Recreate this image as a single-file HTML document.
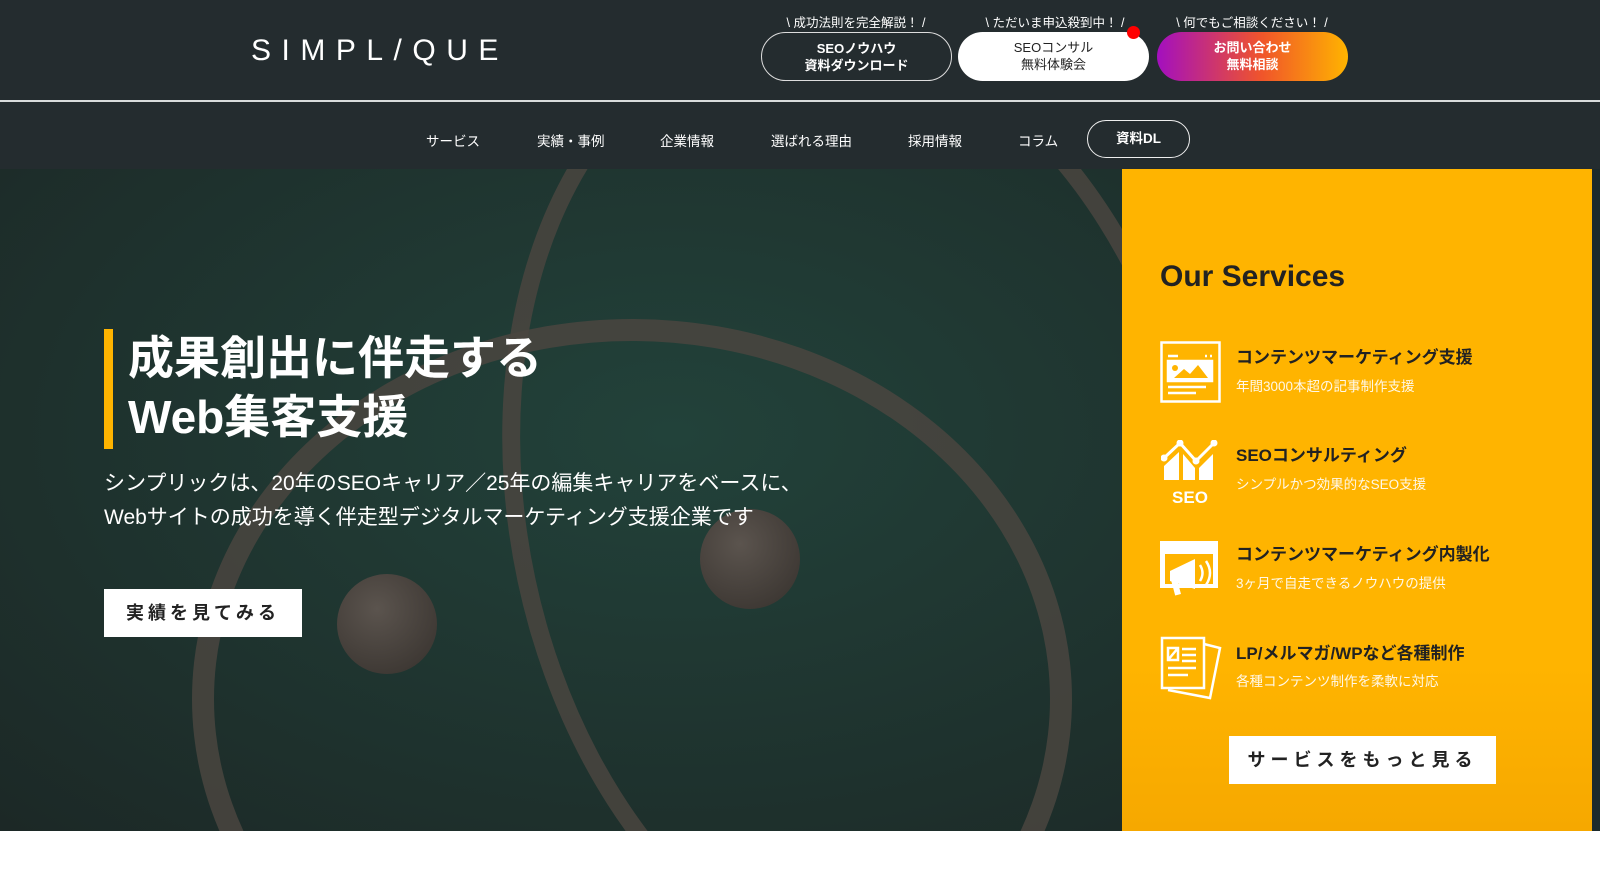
<!DOCTYPE html>
<html><head><meta charset="utf-8"><style>
*{margin:0;padding:0;box-sizing:border-box}
html,body{width:1600px;height:880px;overflow:hidden}
body{background:#fff;font-family:"Liberation Sans","Noto Sans CJK JP",sans-serif;position:relative}
.hdr{position:absolute;left:0;top:0;width:1600px;height:169px;background:#242c2f}
.line{position:absolute;left:0;top:100px;width:1600px;height:2px;background:#d9dcdc}
.logo{position:absolute;left:251px;top:34px;color:#fff;font-size:30px;letter-spacing:10.5px;font-weight:400}
.tag{position:absolute;top:12px;color:#fff;font-size:12.5px;text-align:center;width:200px}
.btn{position:absolute;top:32px;height:49px;border-radius:25px;font-size:13px;font-weight:700;text-align:center;line-height:17px;padding-top:7px}
.nav{position:absolute;top:130px;color:#fff;font-size:13.5px}
.hero{position:absolute;left:0;top:169px;width:1122px;height:662px;background:radial-gradient(ellipse at 60% 40%,#22423a 0%,#1f3530 50%,#1c2826 100%);overflow:hidden}
.ring{position:absolute;border-radius:50%;border:22px solid #4a4540;opacity:.85}
.ball{position:absolute;border-radius:50%;background:radial-gradient(circle at 40% 35%,#5b544e,#35302c)}
.panel{position:absolute;left:1122px;top:169px;width:470px;height:662px;background:linear-gradient(#ffb400 75%,#f6a800)}
.strip{position:absolute;left:1592px;top:169px;width:8px;height:662px;background:#1c2a2c}
.svc{position:absolute;left:1236px;color:#222;font-size:17px;font-weight:700}
.sub{position:absolute;left:1236px;color:#fff8e8;font-size:13.5px}
</style></head><body>
<div class="hdr"></div><div class="line"></div>
<div class="logo">SIMPL/QUE</div>
<div class="tag" style="left:756px">\ 成功法則を完全解説！ /</div>
<div class="tag" style="left:955px">\ ただいま申込殺到中！ /</div>
<div class="tag" style="left:1152px">\ 何でもご相談ください！ /</div>
<div class="btn" style="left:761px;width:191px;border:1.5px solid #ddd;color:#fff">SEOノウハウ<br>資料ダウンロード</div>
<div class="btn" style="left:958px;width:191px;background:#fff;color:#222;font-weight:400">SEOコンサル<br>無料体験会</div>
<div style="position:absolute;left:1127px;top:26px;width:13px;height:13px;border-radius:50%;background:#f00"></div>
<div class="btn" style="left:1157px;width:191px;background:linear-gradient(90deg,#a30fbf,#f0552a 55%,#ffb400);color:#fff">お問い合わせ<br>無料相談</div>
<div class="nav" style="left:426px">サービス</div>
<div class="nav" style="left:537px">実績・事例</div>
<div class="nav" style="left:660px">企業情報</div>
<div class="nav" style="left:771px">選ばれる理由</div>
<div class="nav" style="left:908px">採用情報</div>
<div class="nav" style="left:1018px">コラム</div>
<div style="position:absolute;left:1087px;top:120px;width:103px;height:38px;border:1.5px solid #eee;border-radius:19px;color:#fff;font-size:13.5px;font-weight:700;text-align:center;line-height:35px">資料DL</div>
<div class="hero">
<div class="ring" style="left:192px;top:150px;width:880px;height:760px"></div>
<div class="ring" style="left:510px;top:-160px;width:700px;height:1000px;transform:rotate(-12deg);border-width:18px"></div>
<div class="ball" style="left:337px;top:405px;width:100px;height:100px"></div>
<div class="ball" style="left:700px;top:340px;width:100px;height:100px"></div>
<div style="position:absolute;left:104px;top:160px;width:9px;height:120px;background:#ffb400"></div>
<div style="position:absolute;left:128px;top:160px;color:#fff;font-size:46px;font-weight:700;line-height:59px">成果創出に伴走する<br>Web集客支援</div>
<div style="position:absolute;left:104px;top:298px;color:#fff;font-size:21px;line-height:34px">シンプリックは、20年のSEOキャリア／25年の編集キャリアをベースに、<br>Webサイトの成功を導く伴走型デジタルマーケティング支援企業です</div>
<div style="position:absolute;left:104px;top:420px;width:198px;height:48px;background:#fff;color:#222;font-size:18px;font-weight:700;letter-spacing:4px;text-align:center;line-height:48px">実績を見てみる</div>
</div>
<div class="panel"></div><div class="strip"></div>
<div style="position:absolute;left:1160px;top:260px;color:#222;font-size:30px;font-weight:700">Our Services</div>
<svg style="position:absolute;left:1160px;top:341px" width="61" height="62" viewBox="0 0 61 62" fill="none" stroke="#fff" stroke-width="2.5"><rect x="1.5" y="1.5" width="58" height="59"/><rect x="8" y="20" width="44" height="20" fill="#fff"/><path d="M8 15h10M45 15h2M50 15h2M8 46h38M8 52h28"/><path d="M14 37l10-9 6 5 8-9 10 13z" fill="#ffb400" stroke="none"/><circle cx="15" cy="27" r="3" fill="#ffb400" stroke="none"/></svg>
<svg style="position:absolute;left:1161px;top:440px" width="58" height="65" viewBox="0 0 58 65"><path d="M3 18l16-15 16 18 18-18" stroke="#fff" stroke-width="3" fill="none"/><g fill="#fff"><circle cx="3" cy="18" r="3.5"/><circle cx="19" cy="3" r="3.5"/><circle cx="35" cy="21" r="3.5"/><circle cx="53" cy="3" r="3.5"/><path d="M3 40v-14l15-14 v28zM22 40v-26l12 14 v12zM38 40v-12l14-14v26z"/></g><text x="29" y="63" fill="#fff" font-size="17" font-weight="700" text-anchor="middle" font-family="Liberation Sans">SEO</text></svg>
<svg style="position:absolute;left:1160px;top:541px" width="60" height="57" viewBox="0 0 60 57"><rect x="0" y="0" width="58" height="47" fill="#fff"/><rect x="5" y="13" width="48" height="30" fill="#ffb400"/><g fill="#fff"><circle cx="31" cy="6" r="2.5"/><circle cx="39" cy="6" r="2.5"/><circle cx="47" cy="6" r="2.5"/><path d="M10 30l25-12v30l-25-8z"/><rect x="13" y="38" width="6" height="16" transform="rotate(-15 16 46)"/></g><path d="M40 24q5 8 0 16M46 20q8 12 0 24" stroke="#fff" stroke-width="2.5" fill="none"/></svg>
<svg style="position:absolute;left:1160px;top:636px" width="62" height="64" viewBox="0 0 62 64" fill="none" stroke="#fff" stroke-width="2.5"><path d="M44 8l16 4-10 50-42-8"/><rect x="2" y="2" width="42" height="50" fill="#ffb400"/><path d="M8 12h10v12h-10z M8 24l10-12" /><path d="M22 13h14M22 19h14M22 25h14M8 32h28M8 39h20"/></svg>
<div class="svc" style="top:343px">コンテンツマーケティング支援</div>
<div class="sub" style="top:375px">年間3000本超の記事制作支援</div>
<div class="svc" style="top:441px">SEOコンサルティング</div>
<div class="sub" style="top:473px">シンプルかつ効果的なSEO支援</div>
<div class="svc" style="top:540px">コンテンツマーケティング内製化</div>
<div class="sub" style="top:572px">3ヶ月で自走できるノウハウの提供</div>
<div class="svc" style="top:639px">LP/メルマガ/WPなど各種制作</div>
<div class="sub" style="top:670px">各種コンテンツ制作を柔軟に対応</div>
<div style="position:absolute;left:1229px;top:736px;width:267px;height:48px;background:#fff;color:#222;font-size:18px;font-weight:700;letter-spacing:5px;text-align:center;line-height:48px">サービスをもっと見る</div>
</body></html>
